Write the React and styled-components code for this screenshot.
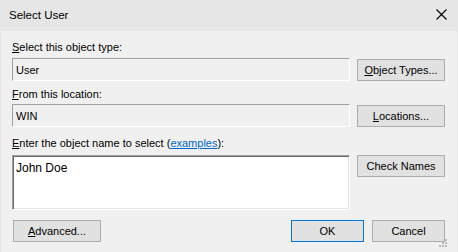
import styled, { createGlobalStyle } from 'styled-components';

const GlobalStyle = createGlobalStyle`
  html, body {
    margin: 0;
    padding: 0;
    background: #f0f0f0;
    overflow: hidden;
  }
  * {
    box-sizing: border-box;
  }
`;

const Window = styled.div`
  position: relative;
  width: 458px;
  height: 252px;
  display: flex;
  flex-direction: column;
  background: #e6e6e6;
  font-family: 'Liberation Sans', Arial, sans-serif;
  font-size: 11px;
  color: #000;
`;

const TitleBar = styled.div`
  height: 31px;
  display: flex;
  align-items: center;
  justify-content: space-between;
  padding: 0 11px 2px 9px;
`;

const Title = styled.div`
  font-size: 11.5px;
  color: #000;
`;

const Content = styled.div`
  flex: 1;
  margin: 0 1px 0 1px;
  background: #f0f0f0;
  padding: 9px 12px 0 11px;
  display: grid;
  grid-template-columns: 338px 88px;
  column-gap: 7px;
  align-items: end;
  align-content: start;
`;

const Label = styled.div`
  grid-column: 1 / -1;
  line-height: 14px;
  margin-top: ${(p) => p.$top || 0}px;
  margin-bottom: ${(p) => p.$bottom || 4}px;
`;

const Field = styled.div`
  height: 23px;
  display: flex;
  align-items: center;
  padding-left: 3px;
  border: 1px solid;
  border-color: #a0a0a0 #fff #fff #a0a0a0;
  background: #f0f0f0;
`;

const NameBox = styled.div`
  height: 55px;
  background: #fff;
  border: 1px solid;
  border-color: #a0a0a0 #fff #fff #a0a0a0;
  box-shadow: inset 1px 1px 0 #696969, inset -1px -1px 0 #e3e3e3;
  padding: 5px 3px;
  font-size: 12px;
  line-height: 14px;
`;

const Button = styled.button`
  height: 22px;
  width: ${(p) => p.$width || 88}px;
  padding: 0;
  font-family: inherit;
  font-size: 11px;
  color: #000;
  background: #e1e1e1;
  border: 1px solid ${(p) => (p.$default ? '#0078d7' : '#adadad')};
  align-self: ${(p) => p.$align || 'end'};
`;

const Footer = styled.div`
  grid-column: 1 / -1;
  display: flex;
  align-items: center;
  gap: 8px;
  margin-top: 10px;
  padding-left: 1px;
`;

const Spacer = styled.div`
  flex: 1;
`;

const Link = styled.span`
  color: #0066cc;
  text-decoration: underline;
`;

const Grip = styled.svg`
  position: absolute;
  right: 11px;
  bottom: 5px;
`;

const CloseIcon = () => (
  <svg width="11" height="11" viewBox="0 0 11 11">
    <path d="M0.5 0.5 L10.5 10.5 M10.5 0.5 L0.5 10.5" stroke="#000" strokeWidth="1.1" />
  </svg>
);

export default function App() {
  return (
    <Window>
      <GlobalStyle />
      <TitleBar>
        <Title>Select User</Title>
        <CloseIcon />
      </TitleBar>
      <Content>
        <Label>
          <u>S</u>elect this object type:
        </Label>
        <Field>User</Field>
        <Button>
          <u>O</u>bject Types...
        </Button>

        <Label $top={6} $bottom={3}>
          <u>F</u>rom this location:
        </Label>
        <Field>WIN</Field>
        <Button>
          <u>L</u>ocations...
        </Button>

        <Label $top={9} $bottom={5}>
          <u>E</u>nter the object name to select (<Link>examples</Link>):
        </Label>
        <NameBox>John Doe</NameBox>
        <Button $align="start">Check Names</Button>

        <Footer>
          <Button>
            <u>A</u>dvanced...
          </Button>
          <Spacer />
          <Button $width={73} $default>
            OK
          </Button>
          <Button $width={73}>Cancel</Button>
        </Footer>
      </Content>
      <Grip width="8" height="8" viewBox="0 0 8 8">
        <rect x="6" y="0" width="2" height="2" fill="#b8b8b8" />
        <rect x="3" y="3" width="2" height="2" fill="#b8b8b8" />
        <rect x="6" y="3" width="2" height="2" fill="#b8b8b8" />
        <rect x="0" y="6" width="2" height="2" fill="#b8b8b8" />
        <rect x="3" y="6" width="2" height="2" fill="#b8b8b8" />
        <rect x="6" y="6" width="2" height="2" fill="#b8b8b8" />
      </Grip>
    </Window>
  );
}
